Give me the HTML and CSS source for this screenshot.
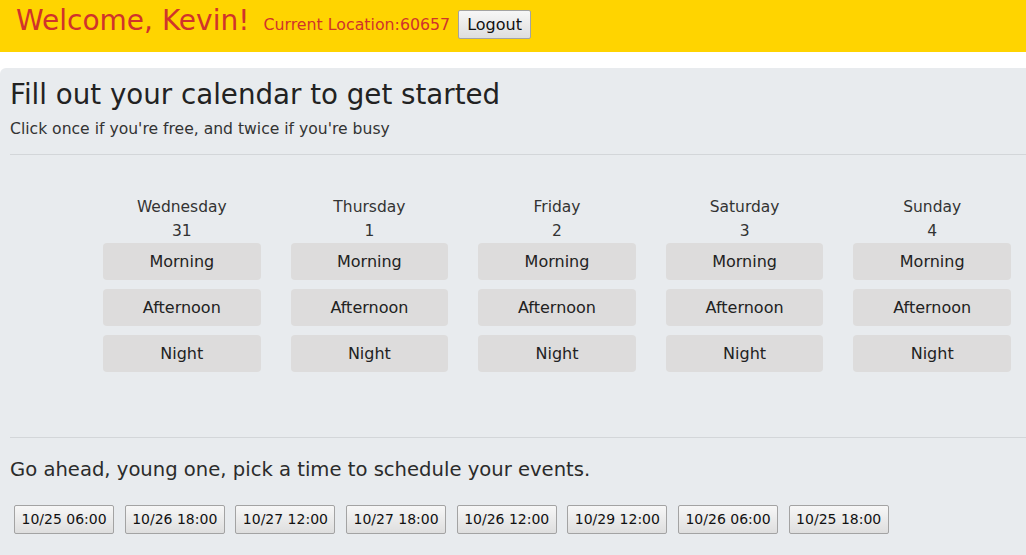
FILE: index.html
```html
<!DOCTYPE html>
<html>
<head>
<meta charset="utf-8">
<link rel="stylesheet" href="styles.css">
</head>
<body>
<header class="topbar">
  <h1 class="welcome">Welcome, Kevin!</h1>
  <span class="location">Current Location:60657</span>
  <button class="btn-native logout">Logout</button>
</header>
<main class="panel">
  <h2 class="title">Fill out your calendar to get started</h2>
  <p class="subtitle">Click once if you're free, and twice if you're busy</p>
  <hr class="rule">
  <section class="days">
    <div class="day">
      <div class="day-name">Wednesday</div>
      <div class="day-num">31</div>
      <div class="slot">Morning</div>
      <div class="slot">Afternoon</div>
      <div class="slot">Night</div>
    </div>
    <div class="day">
      <div class="day-name">Thursday</div>
      <div class="day-num">1</div>
      <div class="slot">Morning</div>
      <div class="slot">Afternoon</div>
      <div class="slot">Night</div>
    </div>
    <div class="day">
      <div class="day-name">Friday</div>
      <div class="day-num">2</div>
      <div class="slot">Morning</div>
      <div class="slot">Afternoon</div>
      <div class="slot">Night</div>
    </div>
    <div class="day">
      <div class="day-name">Saturday</div>
      <div class="day-num">3</div>
      <div class="slot">Morning</div>
      <div class="slot">Afternoon</div>
      <div class="slot">Night</div>
    </div>
    <div class="day">
      <div class="day-name">Sunday</div>
      <div class="day-num">4</div>
      <div class="slot">Morning</div>
      <div class="slot">Afternoon</div>
      <div class="slot">Night</div>
    </div>
  </section>
  <hr class="rule rule-bottom">
  <p class="prompt">Go ahead, young one, pick a time to schedule your events.</p>
  <div class="times">
    <button class="btn-native time">10/25 06:00</button>
    <button class="btn-native time">10/26 18:00</button>
    <button class="btn-native time">10/27 12:00</button>
    <button class="btn-native time">10/27 18:00</button>
    <button class="btn-native time">10/26 12:00</button>
    <button class="btn-native time">10/29 12:00</button>
    <button class="btn-native time">10/26 06:00</button>
    <button class="btn-native time">10/25 18:00</button>
  </div>
</main>
</body>
</html>
```
FILE: styles.css
```css
* { box-sizing: border-box; }
html, body { margin: 0; padding: 0; background: #fff; overflow: hidden; }
body {
  font-family: "DejaVu Sans", "Noto Sans", sans-serif;
  color: #2b2b2b;
  width: 1026px;
  height: 555px;
}
.topbar {
  height: 52px;
  background: #ffd400;
  display: flex;
  align-items: center;
  padding-left: 16px;
}
.welcome {
  margin: 0;
  font-weight: normal;
  font-size: 28px;
  color: #d0332b;
  line-height: 1;
  position: relative;
  top: -5px;
}
.location {
  margin-left: 14px;
  font-size: 15.8px;
  color: #d0332b;
  position: relative;
  top: -2px;
}
.btn-native {
  font-family: "DejaVu Sans", "Noto Sans", sans-serif;
  font-size: 15px;
  color: #111;
  background: linear-gradient(#f7f7f7, #dedede);
  border: 1px solid #a3a3a3;
  border-radius: 2px;
  padding: 0 7px;
  height: 29px;
  line-height: 27px;
  cursor: pointer;
}
.logout {
  margin-left: 8px;
  margin-top: -4px;
  font-size: 16px;
  padding: 0 8px;
}
.panel {
  margin-top: 16px;
  background: #e8ebee;
  border-radius: 6px 0 0 0;
  padding: 11px 0 0 10px;
  height: 487px;
}
.title {
  margin: 0;
  font-weight: normal;
  font-size: 27.7px;
  color: #222;
  line-height: 32px;
}
.subtitle {
  margin: 8px 0 0 0;
  font-size: 15.6px;
  color: #333;
  line-height: 20px;
}
.rule {
  border: 0;
  border-top: 1px solid #d3d6d9;
  margin: 15px 0 0 0;
}
.days {
  display: flex;
  padding-left: 78px;
  margin-top: 40px;
  height: 240px;
}
.day {
  width: 187.7px;
  padding: 0 15px;
  display: flex;
  flex-direction: column;
  align-items: stretch;
  text-align: center;
}
.day-name, .day-num {
  font-size: 15.5px;
  line-height: 24px;
  color: #333;
}
.slot {
  background: #dddcdc;
  border-radius: 4px;
  height: 37px;
  line-height: 37px;
  font-size: 16px;
  color: #222;
  margin-bottom: 9px;
}
.rule-bottom { margin-top: 2px; }
.prompt {
  margin: 20px 0 0 0;
  font-size: 19.6px;
  line-height: 24px;
  color: #2b2b2b;
}
.times {
  display: flex;
  gap: 10.5px;
  margin-top: 23px;
  padding-left: 4px;
}
.time {
  font-size: 14px;
  padding: 0 6.5px;
}
```
